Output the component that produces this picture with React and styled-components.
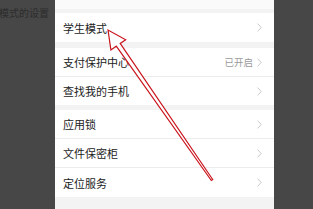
import React from "react";
import styled, { createGlobalStyle } from "styled-components";

const Global = createGlobalStyle`
  html, body { margin: 0; padding: 0; }
  body { width: 313px; height: 209px; overflow: hidden; background: #464646;
    font-family: "Noto Sans CJK SC", "Noto Sans", sans-serif; }
`;

const Screen = styled.div`
  position: relative;
  display: flex;
  width: 313px;
  height: 209px;
  overflow: hidden;
`;

const SidePanel = styled.div`
  width: ${(p) => p.$w}px;
  flex: none;
  background: #474747;
  overflow: hidden;
`;

const SideText = styled.div`
  white-space: nowrap;
  font-size: 10px;
  line-height: 12px;
  color: #2c2c2c;
  margin-top: 7px;
  margin-left: -1px;
`;

const Sheet = styled.div`
  width: 219px;
  flex: none;
  background: #f3f3f3;
  display: flex;
  flex-direction: column;
`;

const Spacer = styled.div`
  height: ${(p) => p.$h}px;
  flex: none;
  background: ${(p) => p.$bg || "#f3f3f3"};
`;

const Group = styled.div`
  background: #fff;
  display: flex;
  flex-direction: column;
`;

const Row = styled.div`
  height: ${(p) => p.$h}px;
  flex: none;
  display: flex;
  align-items: center;
  padding: 0 12px 0 8px;
  box-sizing: border-box;
  border-top: ${(p) => (p.$sep ? "1px solid #ececec" : "none")};
`;

const Label = styled.span`
  flex: 1;
  font-size: 11px;
  color: #222;
`;

const Value = styled.span`
  font-size: 9.5px;
  color: #9a9a9a;
  margin-right: 4px;
`;

const Chevron = () => (
  <svg width="5" height="9" viewBox="0 0 5 9">
    <path d="M0.6 0.6 L4.2 4.5 L0.6 8.4" fill="none" stroke="#c4c4c4" strokeWidth="0.9" />
  </svg>
);

const Overlay = styled.svg`
  position: absolute;
  left: 0;
  top: 0;
  pointer-events: none;
`;

const Item = ({ label, value, h, sep }) => (
  <Row $h={h} $sep={sep}>
    <Label>{label}</Label>
    {value && <Value>{value}</Value>}
    <Chevron />
  </Row>
);

export default function App() {
  const tip = [108, 30];
  const tail = [212, 180];
  const dx = tail[0] - tip[0];
  const dy = tail[1] - tip[1];
  const len = Math.hypot(dx, dy);
  const u = [dx / len, dy / len];
  const n = [-u[1], u[0]];
  const base = [tip[0] + 18 * u[0], tip[1] + 18 * u[1]];
  const pt = (c, k) => [c[0] + k * n[0], c[1] + k * n[1]];
  const pts = [
    tip,
    pt(base, 9),
    pt(base, 2.4),
    pt(tail, 0.9),
    pt(tail, -0.9),
    pt(base, -2.4),
    pt(base, -9),
  ]
    .map((p) => p.map((v) => v.toFixed(1)).join(","))
    .join(" ");

  return (
    <>
      <Global />
      <Screen>
        <SidePanel $w={55}>
          <SideText>模式的设置</SideText>
        </SidePanel>
        <Sheet>
          <Spacer $h={9} $bg="#fafafa" />
          <Spacer $h={4} />
          <Group>
            <Item label="学生模式" h={29} />
          </Group>
          <Spacer $h={6} />
          <Group>
            <Item label="支付保护中心" value="已开启" h={28} />
            <Item label="查找我的手机" h={29} sep />
          </Group>
          <Spacer $h={5} />
          <Group>
            <Item label="应用锁" h={28} />
            <Item label="文件保密柜" h={29} sep />
            <Item label="定位服务" h={30} sep />
          </Group>
          <Spacer $h={12} />
        </Sheet>
        <SidePanel $w={39} />
        <Overlay width="313" height="209" viewBox="0 0 313 209">
          <polygon points={pts} fill="#fff" stroke="#c9141c" strokeWidth="1.2" strokeLinejoin="miter" />
        </Overlay>
      </Screen>
    </>
  );
}
